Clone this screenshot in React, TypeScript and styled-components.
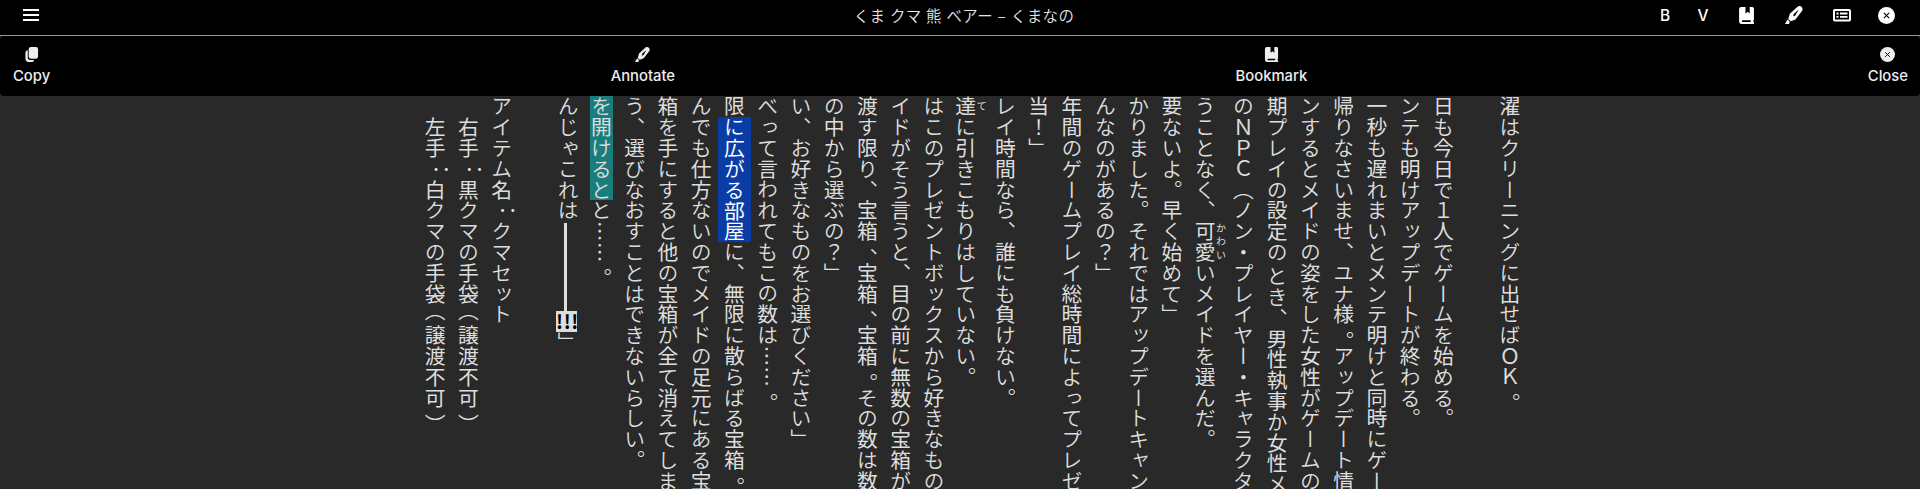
import React from 'react';
import styled, { createGlobalStyle } from 'styled-components';

const Global = createGlobalStyle`
  * { box-sizing: border-box; }
  body { margin: 0; background: #292929; overflow: hidden; }
`;
const Reader = styled.div`
  height: 489px; display: flex; flex-direction: column; overflow: hidden;
  color: #fff; font-family: Inter, "Noto Sans CJK JP", sans-serif;
`;
const TopBar = styled.header`
  height: 36px; flex: none; display: flex; align-items: center; justify-content: space-between;
  padding: 0 14px 5px 22px; background: #000; border-bottom: 1px solid #999;
`;
const Side = styled.div<{ $end?: boolean }>`
  flex: 1 1 0; display: flex; align-items: center; justify-content: ${p => (p.$end ? 'flex-end' : 'flex-start')};
`;
const Title = styled.h1`
  margin: 0; font: 350 15.4px/22px "Noto Sans CJK JP", sans-serif; letter-spacing: 0.5px; word-spacing: 0.5px;
  color: #e6e6e6; white-space: nowrap;
`;
const TopButton = styled.button<{ $w: number }>`
  width: ${p => p.$w}px; height: 24px; padding: 0; border: 0; background: none; color: #fff;
  display: flex; align-items: center; justify-content: center; font: 500 15.5px Inter, sans-serif;
`;
const ActionBar = styled.nav`
  height: 60px; flex: none; display: flex; justify-content: space-between; background: #000;
  border-radius: 4px; padding: 11px 12px 0 13px;
`;
const Action = styled.button`
  padding: 0; border: 0; background: none; color: #eee; display: flex; flex-direction: column; align-items: center;
  gap: 5px; font: 450 14.8px/18px Inter, sans-serif;
`;
const Page = styled.main`
  flex: 1; min-height: 0; display: flex; flex-direction: row-reverse; align-items: flex-start;
  padding-right: 394px; overflow: hidden; color: #ddd;
`;
const Column = styled.p<{ $gap: number; $shift: number }>`
  margin: ${p => p.$shift}px ${p => p.$gap}px 0 0; flex: none; width: 33.28px; writing-mode: vertical-rl;
  white-space: pre; font: 350 20.8px/33.28px "Noto Sans CJK JP", sans-serif;
  rt { font-size: 10px; font-weight: 400; }
`;
const Kanji = styled.span`
  font-weight: 400;
`;
const Colon = styled.span`
  vertical-align: 6px; line-height: 1;
`;
const Nudge = styled.span<{ $y: number }>`
  display: inline-block; margin-top: ${p => p.$y}px; margin-bottom: ${p => -p.$y}px;
`;
const Gap = styled.span`
  display: inline-block; height: 3.5px;
`;
const Highlight = styled.mark`
  color: #ddd; background: linear-gradient(#1a7d7d, #1a7d7d) center / 23px 100% no-repeat;
`;
const Selection = styled.mark`
  color: #fff; background: #0a3ca6; padding: 0 1.5px;
`;
const Dash = styled.span`
  display: inline-block; width: 2.5px; height: 88px; margin-top: 2px; background: #ddd; vertical-align: -2.5px;
`;
const Bangs = styled.span`
  display: inline-block; width: 21px; height: 21px; background: #ddd; color: #000; vertical-align: -1.5px;
  writing-mode: horizontal-tb; text-align: center; font: 700 19px/20px "Noto Sans CJK JP", sans-serif; letter-spacing: 0.6px;
  overflow: hidden;
`;

const CopyIcon = ({ s = 15 }) => (
  <svg width={s} height={s} viewBox="0 0 16 16" fill="currentColor">
    <rect x="5" y="0" width="10" height="12.5" rx="2.500" />
    <path d="M4 3.500C2.700 3.700 1.500 4.600 1.500 6v6c0 2.500 1.200 4 3.500 4h3c1.400 0 2.500-.8 2.700-2.200H6.500C4.800 13.800 4 12.800 4 11.200z" />
  </svg>
);
const BookIcon = ({ s = 15 }) => (
  <svg width={s} height={s} viewBox="0 0 16 16" fill="currentColor" fillRule="evenodd">
    <path d="M3 0h4v6l2-1.500L11 6V0h2.500Q15 0 15 1.500v10q0 .8-.5 1.200v1.500H15V16H3.500Q1 16 1 13.500V2q0-2 2-2M4.500 12.500a.8.8 0 0 0 0 1.700H12v-1.700z" />
  </svg>
);
const PenIcon = ({ s = 15 }) => (
  <svg width={s} height={s} viewBox="0 0 16 16" fill="currentColor" fillRule="evenodd">
    <path d="M11.200.6c1.300-.9 3-.5 3.800.5.8 1 .8 2.300.1 3.300l-5.800 7.700-4.200 1.500-2.200-2 1.400-4.800zM12.200 3.200 7.800 7l-.6 2.300 2-.9z" />
    <path d="M2.200 12 4.300 14 3.500 16H0z" />
  </svg>
);
const CloseIcon = ({ s = 15 }) => (
  <svg width={s} height={s} viewBox="0 0 16 16">
    <circle cx="8" cy="8" r="8" fill="currentColor" />
    <path d="m5.500 5.500 5 5m0-5-5 5" stroke="#000" strokeWidth="1" />
  </svg>
);
const ListIcon = () => (
  <svg width="18" height="14" viewBox="0 0 18 14" fill="none" stroke="currentColor">
    <rect x="1" y="2" width="16" height="10.500" rx="0.800" strokeWidth="2" />
    <path d="M3.500 5.500h2m1.500 0h7.500M3.500 8.800h2m1.500 0h7.500" strokeWidth="1.800" />
  </svg>
);
const MenuIcon = () => (
  <svg width="18" height="16" viewBox="0 0 18 16" fill="currentColor">
    <path d="M1 2h16v2H1zM1 7h16v2H1zM1 12h16v2H1z" />
  </svg>
);

// Kanji are set a step heavier than kana. In the line strings "^" lowers the mark
// that follows it to the middle of its cell and "_" adds a small space.
const Run = ({ children }: { children: string }) => (
  <>
    {children.split(/(\^.|_|：|[\u4e00-\u9fffＡ-Ｚ]+)/).filter(Boolean).map((part, i) => {
      if (part[0] === '^') {
        return <Nudge key={i} $y={part[1] === '（' ? -3 : 6}>{part[1]}</Nudge>;
      }
      if (part === '_') return <Gap key={i} />;
      if (part === '：') return <Colon key={i}>{part}</Colon>;
      if (/[\u4e00-\u9fffＡ-Ｚ]/.test(part)) return <Kanji key={i}>{part}</Kanji>;
      return part;
    })}
  </>
);

type Line = { text: React.ReactNode; gap?: number; shift?: number };
const lines: Line[] = [
  { text: '濯はクリーニングに出せばＯＫ^。' },
  { text: '日も今日で１人でゲームを始める。', gap: 33.3 },
  { text: 'ンテも明けアップデートが終わる。' },
  { text: '一秒も遅れまいとメンテ明けと同時にゲー' },
  { text: '帰りなさいませ、ユナ様^。アップデート情' },
  { text: 'ンするとメイドの姿をした女性がゲームの' },
  { text: '期プレイの設定の_とき、男性執事か女性メ' },
  { text: 'のＮＰＣ（ノン・プレイヤー・キャラクタ', gap: 0.5 },
  { text: <><Run>うことなく、</Run><ruby><Kanji>可愛</Kanji><rt>かわい</rt></ruby><Run>いメイドを選んだ。</Run></> },
  { text: '要ないよ。早く始めて」', gap: 5 },
  { text: 'かりました。それではアップデートキャン' },
  { text: 'んなのがあるの？」' },
  { text: '年間のゲームプレイ総時間によってプレゼ' },
  { text: '当！」' },
  { text: 'レイ時間なら、誰にも負けない。' },
  { text: <><ruby><Kanji>達</Kanji><rt>て</rt></ruby><Run>に引きこもりはしていない。</Run></>, gap: 1.5 },
  { text: 'はこのプレゼントボックスから好きなもの', gap: 3.5 },
  { text: 'イドがそう言うと、目の前に無数の宝箱が' },
  { text: '渡す限り、宝箱^、宝箱^、宝箱^。その数は数' },
  { text: 'の中から選ぶの？」' },
  { text: 'い、お好きなものをお選びください」' },
  { text: '選べって言われてもこの数は……^。', shift: -20.8 },
  { text: <><Kanji>限</Kanji><Selection><Run>に広がる部屋</Run></Selection><Run>に、無限に散らばる宝箱^。</Run></> },
  { text: 'んでも仕方ないのでメイドの足元にある宝' },
  { text: '箱を手にすると他の宝箱が全て消えてしま' },
  { text: 'う、選びなおすことはできないらしい。' },
  { text: <><Highlight><Run>を開けると</Run></Highlight><Run>と……^。</Run></> },
  { text: <>んじゃこれは<Dash /><Bangs>!!!</Bangs>」</> },
  { text: 'アイテム名：クマセット', gap: 33.2 },
  { text: '　右手：黒クマの手袋^（譲渡不可^）' },
  { text: '　左手：白クマの手袋^（譲渡不可^）' },
];

export default function App() {
  return (
    <Reader>
      <Global />
      <TopBar>
        <Side><MenuIcon /></Side>
        <Title>くま クマ 熊 ベアー – くまなの</Title>
        <Side $end>
          <TopButton $w={38}>B</TopButton>
          <TopButton $w={38}>V</TopButton>
          <TopButton $w={48}><BookIcon s={17} /></TopButton>
          <TopButton $w={48}><PenIcon s={18} /></TopButton>
          <TopButton $w={48}><ListIcon /></TopButton>
          <TopButton $w={40}><CloseIcon s={17} /></TopButton>
        </Side>
      </TopBar>
      <ActionBar>
        <Action><CopyIcon />Copy</Action>
        <Action><PenIcon />Annotate</Action>
        <Action><BookIcon />Bookmark</Action>
        <Action><CloseIcon />Close</Action>
      </ActionBar>
      <Page>
        {lines.map((l, i) => (
          <Column key={i} $gap={l.gap ?? 0} $shift={l.shift ?? 0}>
            {typeof l.text === 'string' ? <Run>{l.text}</Run> : l.text}
          </Column>
        ))}
      </Page>
    </Reader>
  );
}
